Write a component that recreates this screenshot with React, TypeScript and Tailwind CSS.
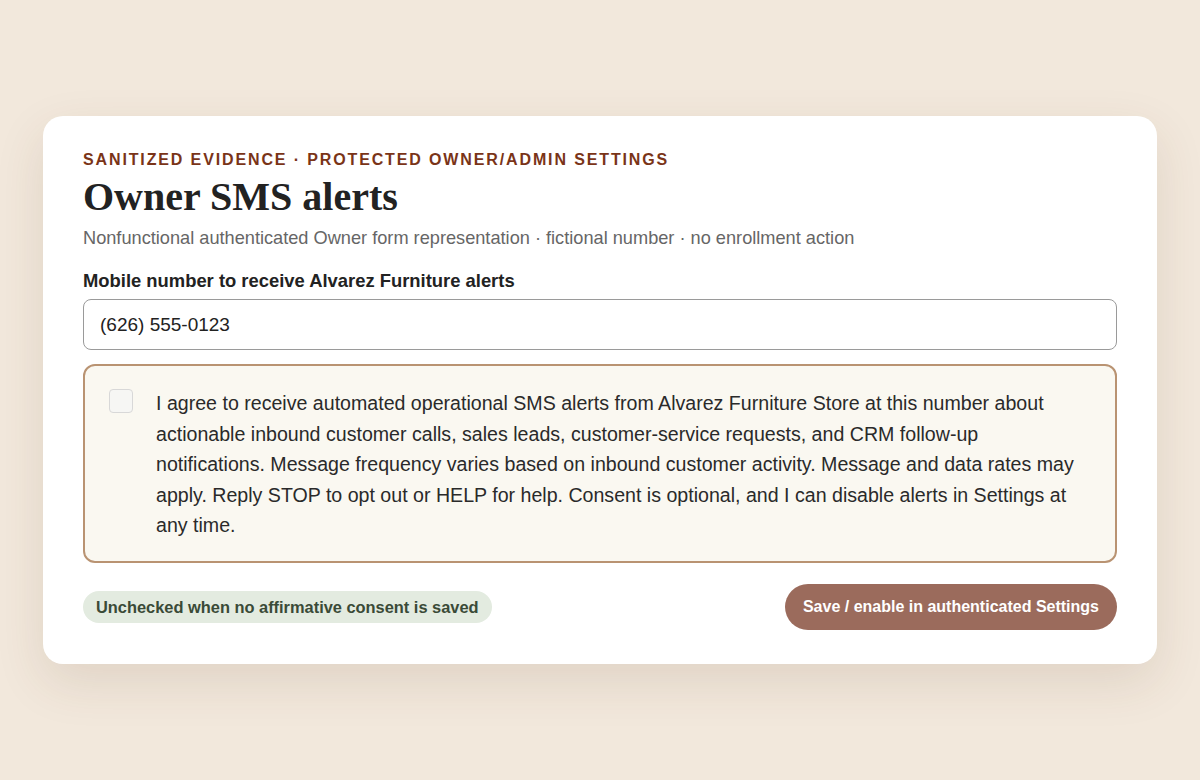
export default function App() {
  return (
    <div
      className="flex min-h-[780px] w-full items-center justify-center bg-[#f2e8dc] py-[116px]"
      style={{ fontFamily: '"Liberation Sans", Arial, sans-serif' }}
    >
      <div className="w-[1114px] rounded-[20px] bg-white px-10 pb-[34px] pt-[34px] shadow-[0_18px_50px_rgba(90,60,30,0.12)]">
        <div className="text-[16px] font-bold uppercase leading-5 tracking-[0.117em] text-[#7a3418]">
          Sanitized evidence · Protected owner/admin settings
        </div>
        <h1
          className="mt-[5px] text-[40px] font-bold leading-[44px] text-[#222]"
          style={{ fontFamily: '"Liberation Serif", Georgia, serif' }}
        >
          Owner SMS alerts
        </h1>
        <p className="mt-[6px] text-[18.2px] leading-[26px] text-[#666]">
          Nonfunctional authenticated Owner form representation · fictional number · no enrollment action
        </p>

        <label className="mt-[17px] block text-[18.4px] font-bold leading-[26px] text-[#222]">
          Mobile number to receive Alvarez Furniture alerts
        </label>
        <div className="mt-[5px] flex h-[51px] items-center rounded-lg border border-[#9a9a9a] px-4 text-[19px] text-[#222]">
          (626) 555-0123
        </div>

        <div className="mt-[14px] flex gap-[23px] rounded-xl border-2 border-[#b99372] bg-[#faf8f1] px-6 pb-[20px] pt-[22px]">
          <div className="mt-[1px] h-6 w-6 shrink-0 rounded-[4px] border border-[#d8d8d8] bg-[#f6f6f4]" />
          <p className="text-[19.6px] leading-[30.5px] text-[#2a2a2a]">
            I agree to receive automated operational SMS alerts from Alvarez Furniture Store at this number about
            actionable inbound customer calls, sales leads, customer-service requests, and CRM follow-up
            notifications. Message frequency varies based on inbound customer activity. Message and data rates may
            apply. Reply STOP to opt out or HELP for help. Consent is optional, and I can disable alerts in Settings at
            any time.
          </p>
        </div>

        <div className="mt-[21px] flex items-center justify-between">
          <span className="rounded-full bg-[#e3ebe0] px-[13px] py-[6px] text-[16.4px] font-bold leading-5 text-[#3a4a37]">
            Unchecked when no affirmative consent is saved
          </span>
          <button
            type="button"
            className="h-[46px] rounded-full bg-[#9b6b5c] px-[18px] text-[16px] font-bold text-white"
          >
            Save / enable in authenticated Settings
          </button>
        </div>
      </div>
    </div>
  )
}
